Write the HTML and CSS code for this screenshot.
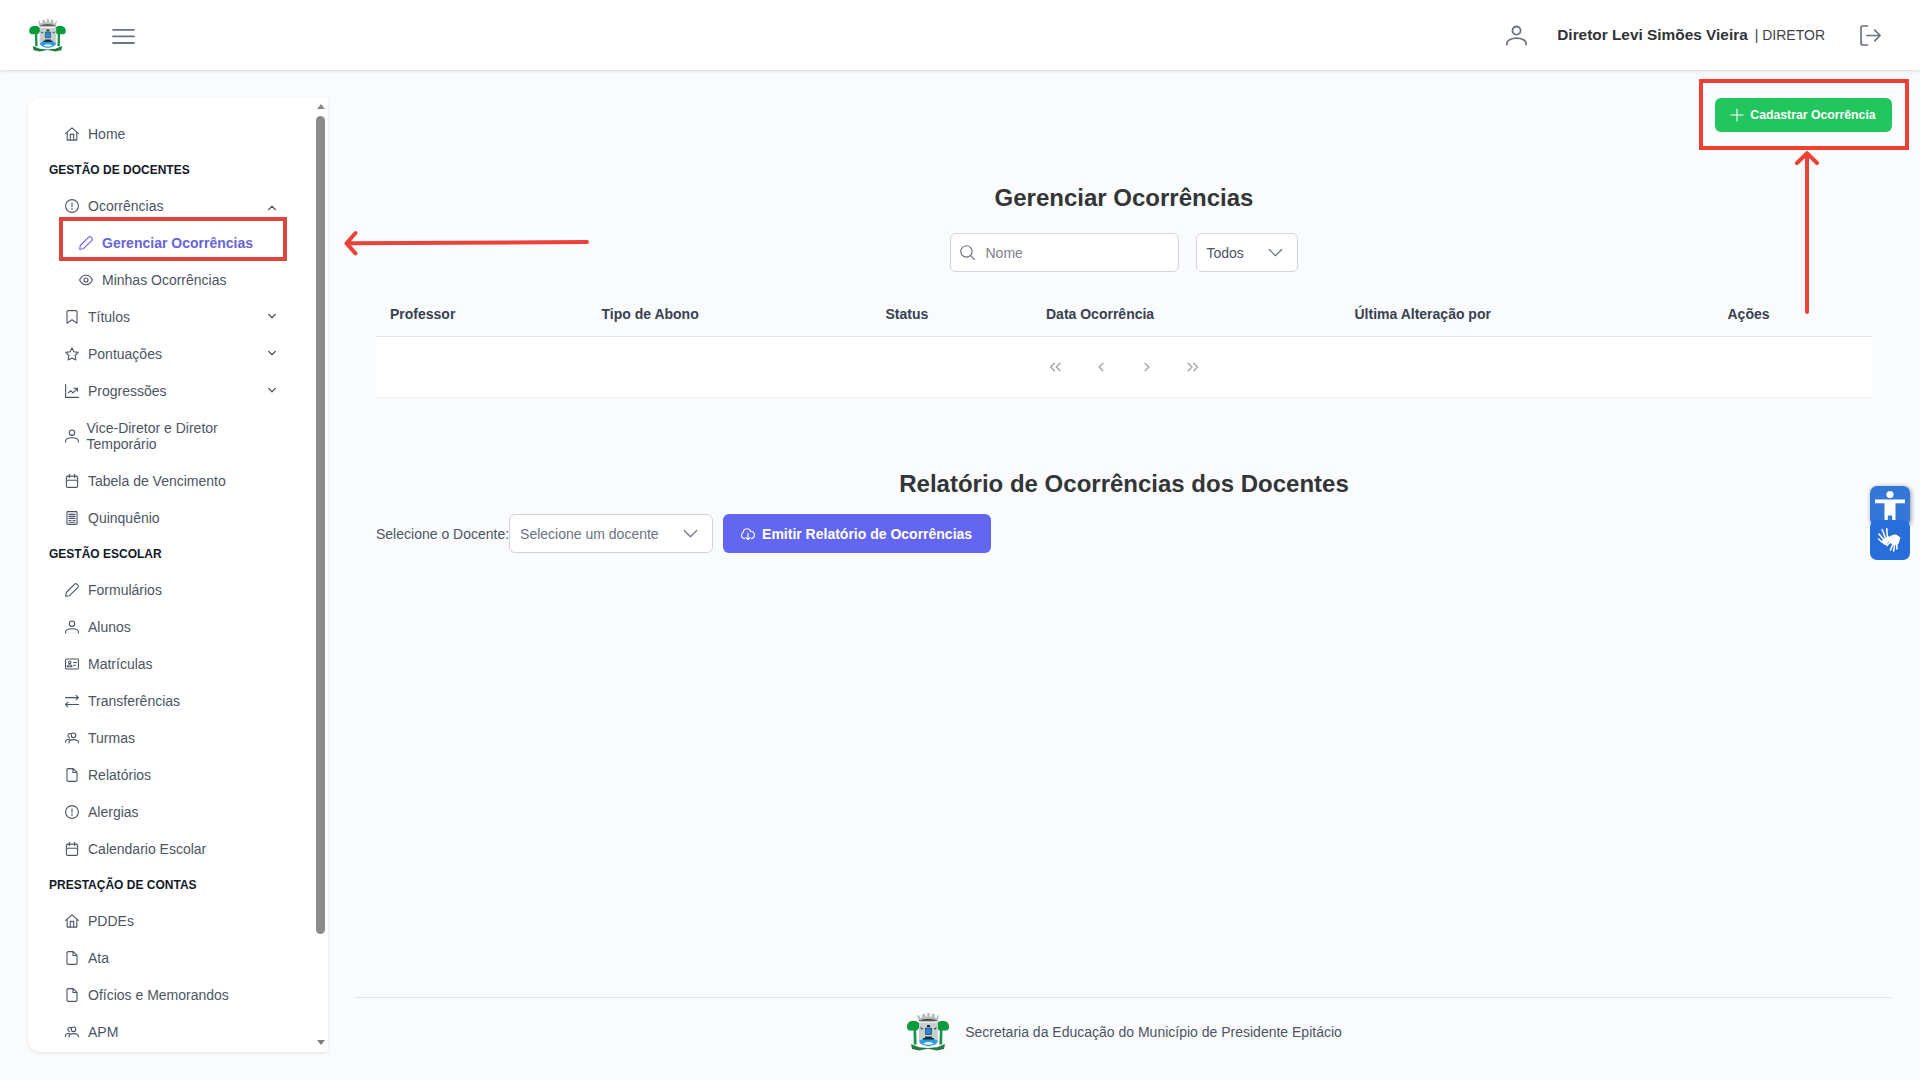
FILE: index.html
```html
<!DOCTYPE html>
<html lang="pt-BR">
<head>
<meta charset="utf-8">
<title>Gerenciar Ocorrências</title>
<link rel="stylesheet" href="styles.css">
</head>
<body>
<svg class="sprite" aria-hidden="true">
  <symbol id="home" viewBox="0 0 14 14"><path d="M.6 6.400 7 .9l6.400 5.500M2.200 5.200v7.900h9.600V5.200M5.300 13V7.400h3.400V13"/></symbol>
  <symbol id="alert" viewBox="0 0 14 14"><circle cx="7" cy="7" r="6.400"/><path d="M7 3.700v4M7 9.200v1.200"/></symbol>
  <symbol id="pencil" viewBox="0 0 14 14"><path d="m.7 13.300.6-3.800L9.700 1.100c.6-.6 1.500-.6 2.100 0l1.100 1.100c.6.6.6 1.500 0 2.100L4.500 12.700Z"/></symbol>
  <symbol id="eye" viewBox="0 0 14 14"><path d="M.6 7C2 4 4.200 2.300 7 2.300S12 4 13.400 7C12 10 9.800 11.700 7 11.700S2 10 .6 7Z"/><circle cx="7" cy="7" r="2"/></symbol>
  <symbol id="bookmark" viewBox="0 0 14 14"><path d="M2 13.200V1.800C2 1.100 2.500.6 3.200.6h7.600c.7 0 1.200.5 1.200 1.200v11.400L7 9.700Z"/></symbol>
  <symbol id="star" viewBox="0 0 14 14"><path d="m7 .9 1.900 3.900 4.300.6-3.100 3.100.7 4.400L7 10.900l-3.800 2 .7-4.400L.8 5.400l4.300-.6Z"/></symbol>
  <symbol id="chart" viewBox="0 0 14 14"><path d="M.6.5v12.900h13M3.300 8.900l2.400-2.300 2.200 2.200 3.900-4M9 4.200h3.400v3"/></symbol>
  <symbol id="user" viewBox="0 0 14 14"><circle cx="7" cy="3.700" r="2.700"/><path d="M.6 13v-.8c0-1.900 2.700-3.400 6.400-3.400s6.400 1.500 6.400 3.400v.8"/></symbol>
  <symbol id="calendar" viewBox="0 0 14 14"><rect x="1.400" y="2.100" width="11.200" height="11.300" rx="1.400"/><path d="M1.400 6.200h11.200M4.300.3v3.300M9.700.3v3.300"/></symbol>
  <symbol id="book" viewBox="0 0 14 14"><rect x="2" y=".6" width="10" height="12.800" rx=".8"/><path d="M4 3.400h6M4 5.400h6M4 7.400h6M4 9.500h2M8 9.500h2M4 11.300h6"/></symbol>
  <symbol id="idcard" viewBox="0 0 14 14"><rect x=".6" y="2" width="12.800" height="10" rx=".8"/><circle cx="4.700" cy="5.400" r="1.200"/><path d="M2.400 9.700c.3-1.600 1.200-2 2.300-2s2 .4 2.300 2ZM8.500 5.500h3M8.500 8.200h2.200"/></symbol>
  <symbol id="arrows" viewBox="0 0 14 14"><path d="M.4 3.600h13M11.100 1.300l2.300 2.300-2.300 2.300M13.600 10.500H.6M2.900 8.200.6 10.500l2.300 2.300"/></symbol>
  <symbol id="users" viewBox="0 0 14 14"><circle cx="8.500" cy="4.300" r="2.300"/><path d="M4 12v-.7c0-1.600 1.900-2.700 4.500-2.700s5 1.100 5 2.700v.7M6 2.700C4.300 2 2.900 3 2.900 4.500c0 1 .6 1.800 1.500 2.100M.6 11.500v-.8c0-1.500 1.400-2.400 4-2.400"/></symbol>
  <symbol id="file" viewBox="0 0 14 14"><path d="M8.200.6H3.200C2.500.6 2 1.100 2 1.800v10.400c0 .7.500 1.200 1.200 1.200h7.600c.7 0 1.200-.5 1.200-1.200V4.400ZM8 .7v3.800h3.900"/></symbol>
  <symbol id="down" viewBox="0 0 14 14"><path d="M1.200 4.200 7 10l5.800-5.800"/></symbol>
  <symbol id="up" viewBox="0 0 14 14"><path d="M1.200 9.800 7 4l5.800 5.800"/></symbol>
  <symbol id="search" viewBox="0 0 14 14"><circle cx="6" cy="6" r="5.300"/><path d="m9.900 9.900 3.600 3.600"/></symbol>
  <symbol id="bars" viewBox="0 0 21 21"><path d="M1 3.500h19M1 9.500h19M1 15.500h19"/></symbol>
  <symbol id="exit" viewBox="0 0 21 21"><path d="M7.500 1H3C1.800 1 1 1.800 1 3v15c0 1.200.8 2 2 2h4.500M6.800 10.500H20M14.800 5.200l5.300 5.300-5.300 5.300"/></symbol>
  <symbol id="plus" viewBox="0 0 14 14"><path d="M7 1v12M1 7h12"/></symbol>
  <symbol id="cloud" viewBox="0 0 14 14"><path d="M3.600 11.600C1.800 11.600.6 10.200.6 8.300c0-1.300.6-2.400 1.600-3C2.500 3.200 4 1.700 6 1.700c1.900 0 3.200 1.100 3.700 2.800 2.200 0 3.700 1.400 3.700 3.500 0 1.900-1.200 3.300-3 3.600M7 6v6.600M4.900 10.600 7 12.700l2.100-2.100"/></symbol>
  <symbol id="crest" viewBox="0 0 42 38">
    <g stroke="none">
    <path fill="#159348" d="M6.500 14h2.500l.6 17.500H6.800ZM33 14h2.500l-.3 17.500h-2.800Z"/>
    <path fill="#079b3c" d="M0 14.500C-.5 10 3 7.500 6.500 8c3.500-.5 6.500 2 6.700 5.500L10 17.500H2.800C1.500 17.500 0 16.500 0 14.500ZM42 14.500C42.500 10 39 7.500 35.500 8c-3.500-.5-6.500 2-6.700 5.500l3.200 4h7.200c1.300 0 2.800-1 2.800-3Z"/>
    <path fill="#267b43" d="m4 31 8 3.200 9 .8 9-.8 8-3.200-1 5-7 1.400-9-1.600-9 1.600-7-1.400Z"/>
    <path fill="#b9bdbd" d="m10 2 2.600.8.500 2.300L15 4.800V1.500l2.800-.8.900 3 1.500.1V0h2.600v3.800l1.500-.1.900-3 2.800.8-.2 3.300 1.900.3.500-2.300L32 2l-1.700 7.200H12.200Z"/>
    <path stroke="#62686a" stroke-width=".8" stroke-dasharray="1.500 1.500" d="M12 7.600q9-2.500 18.500 0"/>
    <path fill="#c9cecf" d="M12 10h19v18c0 4-5 4.500-9.500 6C17 32.500 12 32 12 28Z"/>
    <path fill="#249de2" d="M12.500 27.500 16 26h11l3.500 1.500c0 4-4.500 4.500-9 5.500-4.500-1-9-1.500-9-5.500Z"/>
    <path fill="#2f86cc" stroke="#24506a" stroke-width=".8" d="M18.500 15h6v6.500h-6Z"/>
    <path fill="#152f3d" d="m13 14 3.500 2-2 .5ZM30 14l-3.500 2 2 .5ZM20 12h3v2h-3ZM18 23.500h7v1.500h2v1.500H16V25h2Z"/>
    <path fill="#e6eced" d="M19 29h5l3 2-5.500 1-5.500-1Z"/>
    </g>
  </symbol>
</svg>

<header class="topbar">
  <svg class="logo"><use href="#crest"/></svg>
  <svg class="icon big bars"><use href="#bars"/></svg>
  <div class="account">
    <svg class="icon big person"><use href="#user"/></svg>
    <b class="name">Diretor Levi Simões Vieira</b><span class="role">| DIRETOR</span>
    <svg class="icon big leave"><use href="#exit"/></svg>
  </div>
</header>

<div class="shell">
  <aside class="sidebar">
    <nav class="menu">
      <a class="item"><svg class="icon"><use href="#home"/></svg>Home</a>
      <h6 class="section">GESTÃO DE DOCENTES</h6>
      <a class="item"><svg class="icon"><use href="#alert"/></svg>Ocorrências<svg class="icon toggler open"><use href="#up"/></svg></a>
      <a class="item sub active"><svg class="icon"><use href="#pencil"/></svg>Gerenciar Ocorrências</a>
      <a class="item sub"><svg class="icon"><use href="#eye"/></svg>Minhas Ocorrências</a>
      <a class="item"><svg class="icon"><use href="#bookmark"/></svg>Títulos<svg class="icon toggler"><use href="#down"/></svg></a>
      <a class="item"><svg class="icon"><use href="#star"/></svg>Pontuações<svg class="icon toggler"><use href="#down"/></svg></a>
      <a class="item"><svg class="icon"><use href="#chart"/></svg>Progressões<svg class="icon toggler"><use href="#down"/></svg></a>
      <a class="item wrap"><svg class="icon"><use href="#user"/></svg><span>Vice-Diretor e Diretor<br>Temporário</span></a>
      <a class="item"><svg class="icon"><use href="#calendar"/></svg>Tabela de Vencimento</a>
      <a class="item"><svg class="icon"><use href="#book"/></svg>Quinquênio</a>
      <h6 class="section">GESTÃO ESCOLAR</h6>
      <a class="item"><svg class="icon"><use href="#pencil"/></svg>Formulários</a>
      <a class="item"><svg class="icon"><use href="#user"/></svg>Alunos</a>
      <a class="item"><svg class="icon"><use href="#idcard"/></svg>Matrículas</a>
      <a class="item"><svg class="icon"><use href="#arrows"/></svg>Transferências</a>
      <a class="item"><svg class="icon"><use href="#users"/></svg>Turmas</a>
      <a class="item"><svg class="icon"><use href="#file"/></svg>Relatórios</a>
      <a class="item"><svg class="icon"><use href="#alert"/></svg>Alergias</a>
      <a class="item"><svg class="icon"><use href="#calendar"/></svg>Calendario Escolar</a>
      <h6 class="section">PRESTAÇÃO DE CONTAS</h6>
      <a class="item"><svg class="icon"><use href="#home"/></svg>PDDEs</a>
      <a class="item"><svg class="icon"><use href="#file"/></svg>Ata</a>
      <a class="item"><svg class="icon"><use href="#file"/></svg>Ofícios e Memorandos</a>
      <a class="item"><svg class="icon"><use href="#users"/></svg>APM</a>
    </nav>
    <div class="scrollbar"><i class="tri-up"></i><i class="thumb"></i><i class="tri-down"></i></div>
  </aside>

  <main class="main">
    <div class="toolbar"><button class="btn create"><svg class="icon"><use href="#plus"/></svg>Cadastrar Ocorrência</button></div>
    <section class="content">
      <h2 class="title">Gerenciar Ocorrências</h2>
      <div class="filters">
        <div class="field search"><svg class="icon"><use href="#search"/></svg>Nome</div>
        <div class="field todos">Todos<svg class="icon"><use href="#down"/></svg></div>
      </div>
      <div class="thead"><span>Professor</span><span>Tipo de Abono</span><span>Status</span><span>Data Ocorrência</span><span>Última Alteração por</span><span>Ações</span></div>
      <div class="paginator">
        <svg class="page" viewBox="0 0 42 42"><path d="m20.500 17.200-3.800 3.800 3.800 3.800m5.500-7.600L22.200 21l3.800 3.800"/></svg>
        <svg class="page" viewBox="0 0 42 42"><path d="m22.900 17.200-3.800 3.800 3.800 3.800"/></svg>
        <svg class="page" viewBox="0 0 42 42"><path d="m19.100 17.200 3.800 3.800-3.800 3.800"/></svg>
        <svg class="page" viewBox="0 0 42 42"><path d="m16.200 17.200 3.800 3.800-3.800 3.800m5.500-7.600 3.800 3.800-3.800 3.800"/></svg>
      </div>
      <h2 class="title report-title">Relatório de Ocorrências dos Docentes</h2>
      <div class="report">
        <label>Selecione o Docente:</label>
        <div class="field teacher">Selecione um docente<svg class="icon"><use href="#down"/></svg></div>
        <button class="btn emit"><svg class="icon"><use href="#cloud"/></svg>Emitir Relatório de Ocorrências</button>
      </div>
    </section>
    <footer class="footer"><svg class="seal"><use href="#crest"/></svg>Secretaria da Educação do Município de Presidente Epitácio</footer>
  </main>
</div>

<div class="access">
  <svg viewBox="0 0 40 40" class="tile top"><circle cx="20" cy="8.500" r="3.600"/><path d="M5 13.500h30v3.800H25.500V40h-3.300V29.500h-4.400V40h-3.300V17.300H5Z"/></svg>
  <svg viewBox="0 0 40 40" class="tile hands"><g fill="none" stroke="#fff" stroke-linecap="round" stroke-width="1.600"><path d="m14 20-5-6M15.500 18.500l-3.300-9M17.500 18l-.8-9.500M12.500 22.500l-4-3.500M23.500 22.500l-3 7.500M25 22l-1.300 9M27 21.500l-.2 7.500M21 21l-4 4.500"/></g><path d="M12 20.500 18.500 16c1.500 1 1.500 3 1 4.500l-3 4.500c-2 .5-4-1-4.500-4.500ZM18 19c1-3 4-4.500 8-4.500l4.500 3-2 6.500-5 1-3.500-2Z"/></svg>
</div>

<div class="mark mark-menu"></div>
<div class="mark mark-create"></div>
<svg class="arrow arrow-left" viewBox="0 0 252 30"><path stroke-width="4" d="M248 12 8 13.300M16.500 3 7.500 13.300l9 10"/></svg>
<svg class="arrow arrow-up" viewBox="0 0 28 168"><path stroke-width="4" d="M14 162V3.500M4 13 14 3.200 24 13"/></svg>
</body>
</html>
```
FILE: styles.css
```css
* { box-sizing: border-box; }
body { margin: 0; height: 1080px; overflow: hidden; background: #fafbfd; color: #4b5563; font: 14px/16px "Liberation Sans", Arial, sans-serif; }
.sprite { display: none; }
.icon { width: 14px; height: 14px; flex: none; fill: none; stroke: currentColor; stroke-width: 1.1; stroke-linecap: round; stroke-linejoin: round; }

.topbar { height: 70px; display: flex; align-items: center; background: #fff; padding: 0 39px 0 29px; box-shadow: 0 1px 3px rgba(0,0,0,.14); }
.logo { width: 37px; height: 33px; margin-right: 46px; }
.big { width: 21px; height: 21px; stroke-width: 1.700; color: #6b7280; }
.bars { width: 23px; height: 23px; margin-top: 4px; }
.account { margin-left: auto; display: flex; align-items: center; }
.person { stroke-width: 1.200; margin: 1px 30px 0 0; }
.name { font-size: 15.400px; color: #2f3336; margin-right: 7px; }
.role { color: #3f4347; margin-right: 35px; }

.shell { display: flex; padding: 28px 28px 0; }
.sidebar { width: 300px; height: 954px; display: flex; background: #fff; border-radius: 12px 4px 4px 12px; overflow: hidden; box-shadow: 0 1px 3px rgba(0,0,0,.1); }
.menu { flex: 1; padding: 17.500px 21px 0; height: 954px; overflow: hidden; }
.item { display: flex; align-items: center; padding: 10.500px 16.500px 10.500px 16px; gap: 9px; line-height: 16px; }
.item.sub { padding-left: 30px; }
.item.wrap { gap: 8px; padding-left: 15.500px; }
.item.active { color: #6764d8; font-weight: bold; }
.section { margin: 10.500px 0; font-size: 12px; line-height: 14px; color: #111827; }
.toggler { width: 8px; height: 8px; margin: 0 0 2px auto; stroke-width: 2.300; }
.toggler.open { margin: 3px 0 0 auto; }
.scrollbar { width: 15px; display: flex; flex-direction: column; align-items: center; padding: 6px 3px 7px; }
.tri-up, .tri-down { border: 4.500px solid transparent; }
.tri-up { border-top: 0; border-bottom: 5px solid #8b8b8b; }
.tri-down { border-bottom: 0; border-top: 5px solid #7d7d7d; margin-top: auto; }
.thumb { width: 9px; height: 818px; margin-top: 7px; border-radius: 4.500px; background: #8b8b8b; }

.main { flex: 1; margin-left: 27px; height: 982px; display: flex; flex-direction: column; }
.toolbar { display: flex; justify-content: flex-end; }
.btn { border: 0; border-radius: 6px; color: #fff; font: bold 14px/16px "Liberation Sans", Arial, sans-serif; display: flex; align-items: center; justify-content: center; padding: 0; }
.create { width: 177px; height: 34px; background: #22c55e; font-size: 12.250px; gap: 6px; padding-right: 1px; }
.content { padding: 50px 20px 0 21px; }
.title { margin: 0; text-align: center; font-size: 24px; line-height: 32px; color: #333637; }
.filters { display: flex; justify-content: center; gap: 17px; margin: 19px 1px 20px 0; }
.field { height: 39px; display: flex; align-items: center; background: #fff; border: 1px solid #d1d5db; border-radius: 6px; padding: 0 10px; }
.field .icon { width: 15px; height: 15px; color: #6b7280; }
.search { width: 229px; gap: 11px; color: #7b828c; padding-left: 9px; }
.todos { width: 102px; justify-content: space-between; padding-right: 14px; }
.thead { display: grid; grid-template-columns: 211.500px 284px 160.500px 308.500px 373px 158.500px; height: 45px; align-items: center; border-bottom: 1px solid #e2e6ea; color: #374151; font-weight: bold; }
.thead span { padding-left: 14px; }
.paginator { display: flex; justify-content: center; align-items: center; gap: 4px; height: 61px; background: #fff; border-bottom: 1px solid #eef0f3; padding-right: 1px; }
.page { width: 42px; height: 42px; fill: none; stroke: #a1a5ab; stroke-width: 1.400; stroke-linecap: round; stroke-linejoin: round; }
.report-title { margin-top: 70px; }
.report { display: flex; align-items: center; margin-top: 14px; }
.teacher { width: 204px; justify-content: space-between; padding-right: 14px; color: #6b7280; }
.emit { width: 268px; height: 39px; margin-left: 10px; background: #6366f1; gap: 7px; padding-right: 1px; }
.footer { margin-top: auto; height: 83px; border-top: 1px solid #e1e4e8; display: flex; justify-content: center; padding: 0 0 14px 2px; align-items: center; }
.seal { width: 42px; height: 38px; margin-right: 16px; }

.access { position: absolute; left: 1870px; top: 486px; }
.tile { display: block; width: 40px; height: 40px; border-radius: 7px; background: #3477d9; fill: #fff; box-shadow: 1px 1px 5px rgba(0,0,0,.4); }
.hands { position: relative; margin-top: -6px; background: #286edb; box-shadow: none; }
.mark { position: absolute; border: 4px solid #dd463d; }
.mark-menu { left: 59px; top: 217px; width: 228px; height: 44px; }
.mark-create { left: 1699px; top: 79px; width: 210px; height: 71px; border-color: #f04036; }
.arrow { position: absolute; fill: none; stroke: #ed4237; stroke-linecap: round; stroke-linejoin: round; }
.arrow-left { left: 339px; top: 230px; width: 252px; height: 30px; }
.arrow-up { left: 1793px; top: 150px; width: 28px; height: 168px; }
```
